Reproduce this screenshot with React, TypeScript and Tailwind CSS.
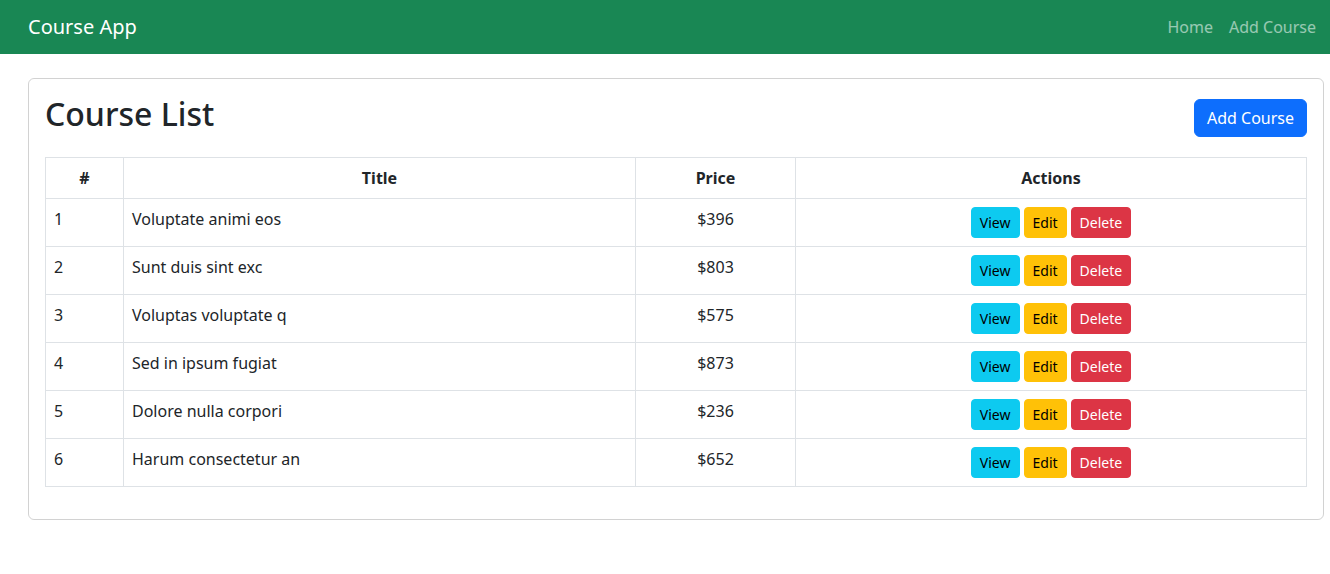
import React from 'react';

const courses = [
  { id: 1, title: 'Voluptate animi eos', price: 396 },
  { id: 2, title: 'Sunt duis sint exc', price: 803 },
  { id: 3, title: 'Voluptas voluptate q', price: 575 },
  { id: 4, title: 'Sed in ipsum fugiat', price: 873 },
  { id: 5, title: 'Dolore nulla corpori', price: 236 },
  { id: 6, title: 'Harum consectetur an', price: 652 },
];

const App = () => {
  return (
    <div className="min-h-screen bg-white text-[#212529] font-['Noto_Sans',sans-serif] text-base">
      {/* Navbar */}
      <nav className="h-[54px] bg-[#198754] flex items-center justify-between pl-[28px] pr-[14px]">
        <span className="text-white text-[20px]">Course App</span>
        <div className="flex gap-4 text-white/55">
          <a href="#">Home</a>
          <a href="#">Add Course</a>
        </div>
      </nav>

      {/* Card */}
      <div className="mt-6 ml-[28px] mr-[6px] border border-black/[0.175] rounded-md p-4">
        <div className="flex items-center justify-between mb-4">
          <h2 className="text-[32px] leading-[1.2] font-medium mb-2">Course List</h2>
          <button className="bg-[#0d6efd] text-white border border-[#0d6efd] rounded-md px-3 py-1.5 leading-6">
            Add Course
          </button>
        </div>

        <table className="w-full border-collapse mb-4">
          <thead>
            <tr>
              <th className="w-[78px] border border-[#dee2e6] p-2 font-bold leading-6 text-center">#</th>
              <th className="w-[512px] border border-[#dee2e6] p-2 font-bold leading-6 text-center">Title</th>
              <th className="w-[160px] border border-[#dee2e6] p-2 font-bold leading-6 text-center">Price</th>
              <th className="border border-[#dee2e6] p-2 font-bold leading-6 text-center">Actions</th>
            </tr>
          </thead>
          <tbody>
            {courses.map((c) => (
              <tr key={c.id}>
                <td className="border border-[#dee2e6] p-2 leading-6 align-top">{c.id}</td>
                <td className="border border-[#dee2e6] p-2 leading-6 align-top">{c.title}</td>
                <td className="border border-[#dee2e6] p-2 leading-6 align-top text-center">${c.price}</td>
                <td className="border border-[#dee2e6] p-2 leading-6 align-top text-center">
                  <div className="flex justify-center gap-1">
                    <button className="bg-[#0dcaf0] border border-[#0dcaf0] text-black text-sm rounded px-2 py-1 leading-[21px]">View</button>
                    <button className="bg-[#ffc107] border border-[#ffc107] text-black text-sm rounded px-2 py-1 leading-[21px]">Edit</button>
                    <button className="bg-[#dc3545] border border-[#dc3545] text-white text-sm rounded px-2 py-1 leading-[21px]">Delete</button>
                  </div>
                </td>
              </tr>
            ))}
          </tbody>
        </table>
      </div>
    </div>
  );
};

export default App;
